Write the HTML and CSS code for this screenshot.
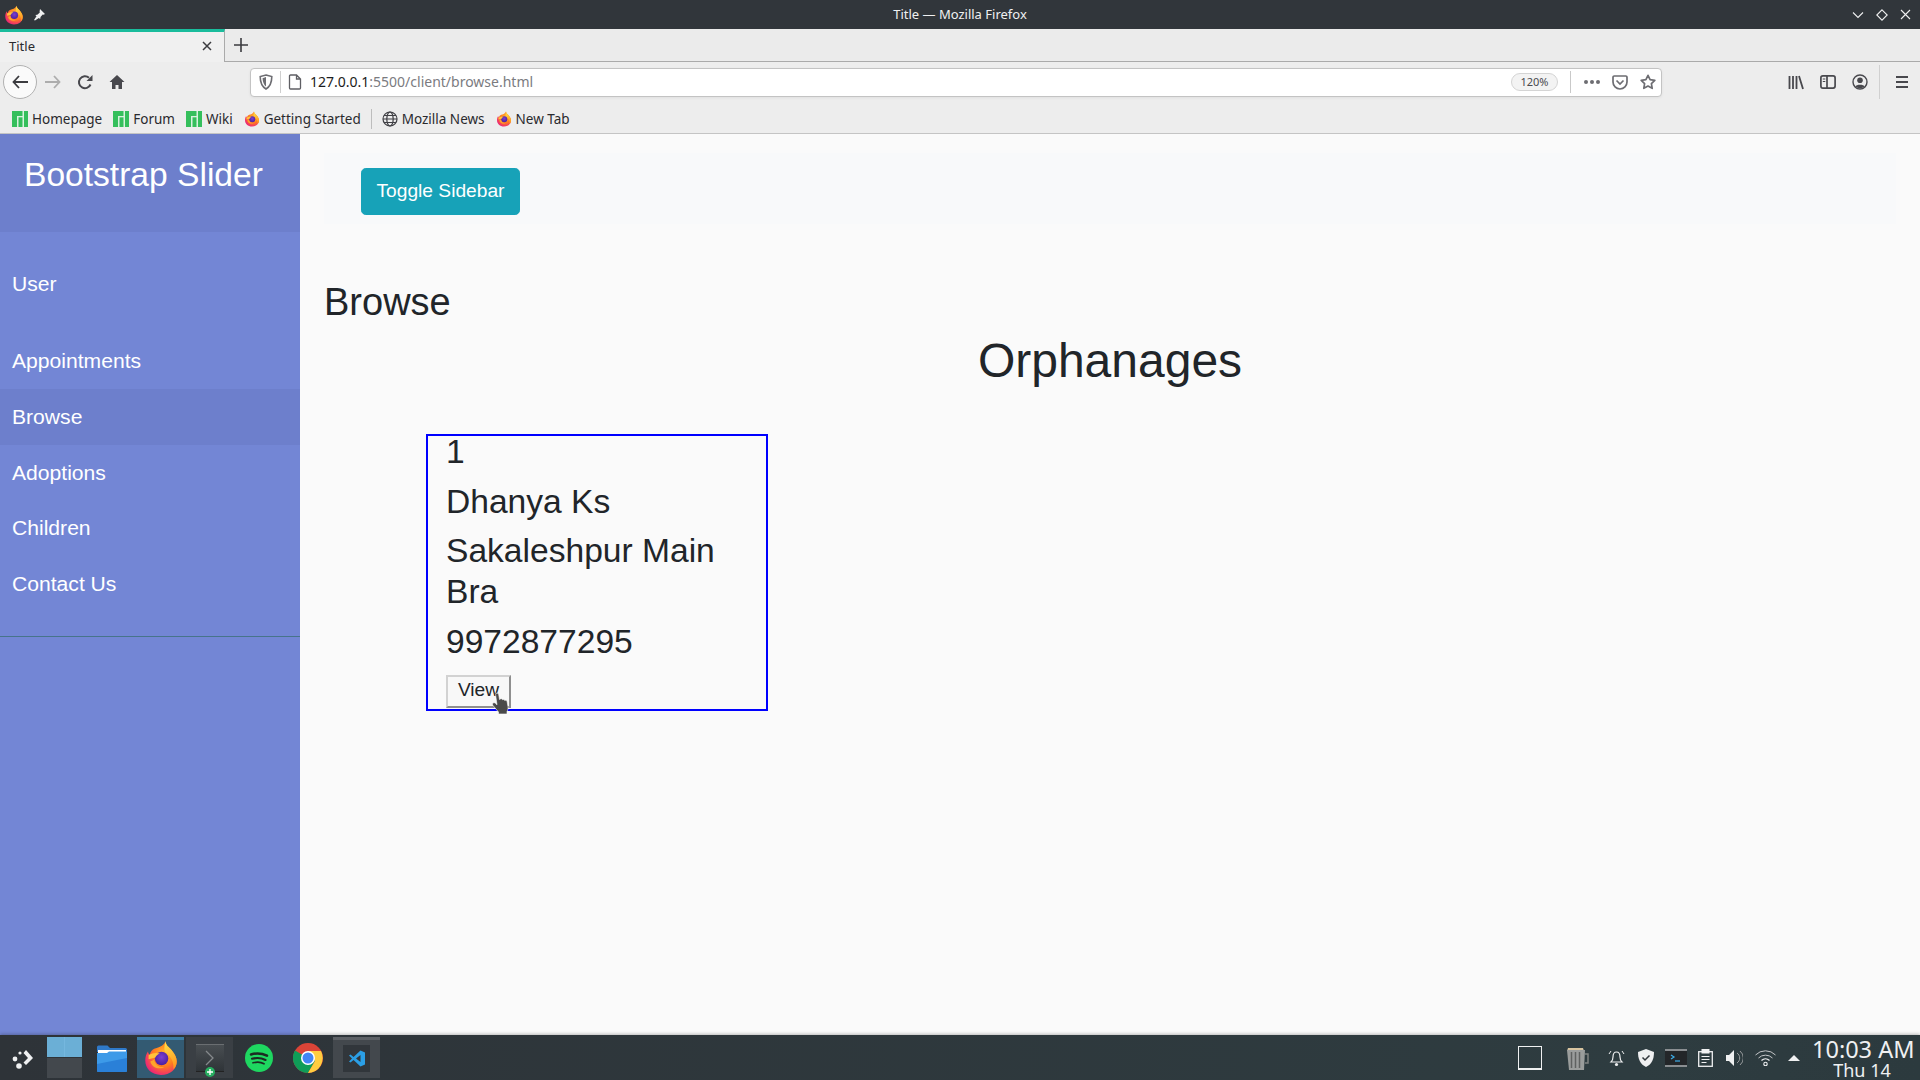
FILE: index.html
```html
<!DOCTYPE html>
<html lang="en">
<head>
<meta charset="utf-8">
<title>Title</title>
<link rel="stylesheet" href="styles.css">
</head>
<body>
<svg class="defs" width="0" height="0">
  <defs>
    <radialGradient id="ffBody" cx="0.6" cy="0.4" r="0.7">
      <stop offset="0" stop-color="#ffc02e"/><stop offset="0.5" stop-color="#ff7a1f"/><stop offset="0.85" stop-color="#f0326a"/><stop offset="1" stop-color="#e0207a"/>
    </radialGradient>
    <linearGradient id="ffFlame" x1="0" y1="0" x2="0.2" y2="1">
      <stop offset="0" stop-color="#ffe14a"/><stop offset="1" stop-color="#ff9a1f"/>
    </linearGradient>
    <radialGradient id="ffCore" cx="0.5" cy="0.4" r="0.6">
      <stop offset="0" stop-color="#7b3fd0"/><stop offset="1" stop-color="#4a1f9e"/>
    </radialGradient>
    <symbol id="firefox" viewBox="0 0 32 32">
      <path d="M20 1c.5 4 3 5 5.500 8 3 3.500 4.500 7 4.500 10 0 7-6 12-14 12S2 26 2 18c0-3 1-6 2.500-8 0 1.500.5 2.500 1.500 3 .5-2.500 2-4.500 4.500-5.500C13 6.500 18 6 20 1z" fill="url(#ffBody)"/>
      <path d="M20 1c.5 4 3 5 5.500 8 3 3.500 4.500 7 4.500 10 0 3-1 5-3 7 .5-5-1-10-5-13-2-1.500-3-3-3-5 0-3 .5-5 1-7z" fill="url(#ffFlame)"/>
      <circle cx="16.500" cy="16.500" r="6" fill="url(#ffCore)"/>
      <path d="M5 13.500c3-2 7-2.500 10-1.500-2 .8-3.500 2-4 3.500l-6 1.500z" fill="#ffc23a"/>
      <path d="M10 17.500c.5 4.500 4.500 7 9 6.500-4 2.500-11 1-12.500-5z" fill="#ffa52b"/>
    </symbol>
    <symbol id="manjaro" viewBox="0 0 16 16">
      <rect width="16" height="16" fill="#35bf5c"/>
      <rect x="5" y="5" width="1.500" height="11" fill="#d9f2df"/>
      <rect x="10.500" y="0" width="1.500" height="16" fill="#d9f2df"/>
      <rect x="5" y="5" width="6" height="1.300" fill="#d9f2df"/>
    </symbol>
  </defs>
</svg>

<header class="titlebar">
  <svg class="tb-fox" width="20" height="22"><use href="#firefox"/></svg>
  <svg class="tb-pin" width="12" height="12" viewBox="0 0 12 12"><path d="M7 0l5 5-1.500.8-.8-.3L7.500 8l-.3 2L5.800 9 2 11.500 1 11l2.500-3.800L2.300 6l2-.3 2.500-2.300-.2-.8z" fill="#eff0f1"/></svg>
  <div class="tb-title">Title — Mozilla Firefox</div>
  <div class="tb-controls">
    <svg width="12" height="8" viewBox="0 0 12 8"><path d="M1 1.500l5 5 5-5" fill="none" stroke="#eff0f1" stroke-width="1.100"/></svg>
    <svg width="12" height="12" viewBox="0 0 12 12"><path d="M6 .8L11.200 6 6 11.200.8 6z" fill="none" stroke="#eff0f1" stroke-width="1.100"/></svg>
    <svg width="11" height="11" viewBox="0 0 11 11"><path d="M1 1l9 9M10 1l-9 9" fill="none" stroke="#eff0f1" stroke-width="1.100"/></svg>
  </div>
</header>

<div class="tabstrip">
  <div class="tab">
    <span class="tab-title">Title</span>
    <svg width="10" height="10" viewBox="0 0 10 10"><path d="M1 1l8 8M9 1l-8 8" fill="none" stroke="#3b3b3f" stroke-width="1.500"/></svg>
  </div>
  <svg class="newtab" width="14" height="14" viewBox="0 0 14 14"><path d="M7 0v14M0 7h14" stroke="#3b3b3f" stroke-width="1.600"/></svg>
</div>

<nav class="toolbar">
  <div class="backbtn">
    <svg width="16" height="14" viewBox="0 0 16 14"><path d="M7 1L1.500 7 7 13M1.500 7H16" fill="none" stroke="#3b3b3f" stroke-width="1.800"/></svg>
  </div>
  <svg class="tool-forward" width="16" height="14" viewBox="0 0 16 14"><path d="M9 1l5.500 6L9 13M14.500 7H0" fill="none" stroke="#adadad" stroke-width="1.800"/></svg>
  <svg class="tool-reload" width="16" height="16" viewBox="0 0 16 16"><path d="M13.500 10.500A6 6 0 1 1 12 3.800" fill="none" stroke="#48484d" stroke-width="2"/><path d="M15.500 1v6h-6z" fill="#48484d"/></svg>
  <svg class="tool-home" width="16" height="16" viewBox="0 0 16 16"><path d="M8 1L.5 8H3v7h3.500v-4h3v4H13V8h2.500z" fill="#48484d"/><rect x="7" y="11" width="2" height="2" fill="#ededed"/></svg>
  <div class="urlbar">
    <svg class="url-shield" width="14" height="16" viewBox="0 0 14 16"><path d="M7 1l5.800 1.500c0 6-1.500 10-5.800 12.500C2.700 12.500 1.200 8.500 1.200 2.500z" fill="none" stroke="#6d6d72" stroke-width="1.600"/><path d="M7 3v9.500C5 11 3.800 8 3.500 4.200z" fill="#6d6d72"/></svg>
    <span class="url-sep"></span>
    <svg class="url-page" width="14" height="16" viewBox="0 0 14 16"><path d="M2.500 1h6L12.500 5v9a1 1 0 0 1-1 1h-9a1 1 0 0 1-1-1V2a1 1 0 0 1 1-1zM8.500 1v4h4" fill="none" stroke="#5f5f64" stroke-width="1.300"/></svg>
    <span class="url-text"><span class="url-host">127.0.0.1</span>:5500/client/browse.html</span>
    <span class="zoom-pill">120%</span>
    <span class="url-sep2"></span>
    <span class="dots"><i></i><i></i><i></i></span>
    <svg class="url-pocket" width="16" height="15" viewBox="0 0 16 15"><path d="M1 2.200A1.200 1.200 0 0 1 2.200 1h11.600A1.200 1.200 0 0 1 15 2.200V7a7 7 0 0 1-14 0z" fill="none" stroke="#6d6d72" stroke-width="1.700"/><path d="M4.500 5.500L8 9l3.500-3.500" fill="none" stroke="#6d6d72" stroke-width="1.700"/></svg>
    <svg class="url-star" width="16" height="16" viewBox="0 0 16 16"><path d="M8 1.300l2.100 4.300 4.700.7-3.400 3.300.8 4.700L8 12l-4.200 2.300.8-4.700L1.200 6.300l4.700-.7z" fill="none" stroke="#6d6d72" stroke-width="1.700" stroke-linejoin="round"/></svg>
  </div>
  <svg class="tool-lib" width="16" height="15" viewBox="0 0 16 15"><path d="M1.500 1v13M5 1v13M8.500 1v13M11 1l4 13" stroke="#48484d" stroke-width="1.800" fill="none"/></svg>
  <svg class="tool-side" width="16" height="14" viewBox="0 0 16 14"><rect x=".9" y=".9" width="14.200" height="12.200" rx="2" fill="none" stroke="#48484d" stroke-width="1.700"/><path d="M7 1v12" stroke="#48484d" stroke-width="1.700"/><path d="M2.800 4h2.500M2.800 6.500h2.500" stroke="#48484d" stroke-width="1.200"/></svg>
  <svg class="tool-acct" width="16" height="16" viewBox="0 0 16 16"><circle cx="8" cy="8" r="7" fill="none" stroke="#48484d" stroke-width="1.400"/><circle cx="8" cy="6.200" r="2.800" fill="#48484d"/><path d="M3.300 12.500c1-2.500 8.400-2.500 9.400 0-2 2.200-7.400 2.200-9.400 0z" fill="#48484d"/></svg>
  <span class="tool-sep"></span>
  <svg class="tool-menu" width="14" height="12" viewBox="0 0 14 12"><path d="M1 1h12M1 6h12M1 11h12" stroke="#48484d" stroke-width="1.800"/></svg>
</nav>

<div class="bookmarks">
  <span class="bm bm-first"><svg width="16" height="16"><use href="#manjaro"/></svg>Homepage</span>
  <span class="bm"><svg width="16" height="16"><use href="#manjaro"/></svg>Forum</span>
  <span class="bm"><svg width="16" height="16"><use href="#manjaro"/></svg>Wiki</span>
  <span class="bm"><svg width="16" height="16"><use href="#firefox"/></svg>Getting Started</span>
  <span class="bm-sep"></span>
  <span class="bm bm-news"><svg width="16" height="16" viewBox="0 0 16 16"><g fill="none" stroke="#3f3f44" stroke-width="1.200"><circle cx="8" cy="8" r="7"/><ellipse cx="8" cy="8" rx="3.200" ry="7"/><path d="M1 8h14M2 4.500h12M2 11.500h12"/></g></svg>Mozilla News</span>
  <span class="bm"><svg width="16" height="16"><use href="#firefox"/></svg>New Tab</span>
</div>

<div class="page">
  <aside class="sidebar">
    <div class="side-head"><h3>Bootstrap Slider</h3></div>
    <div class="side-list">
      <p class="side-user">User</p>
      <a class="side-item">Appointments</a>
      <a class="side-item active">Browse</a>
      <a class="side-item">Adoptions</a>
      <a class="side-item">Children</a>
      <a class="side-item">Contact Us</a>
    </div>
  </aside>
  <main class="content">
    <div class="navbar"><button class="toggle">Toggle Sidebar</button></div>
    <h2 class="browse">Browse</h2>
    <h1 class="orph">Orphanages</h1>
    <div class="cards">
      <article class="card">
        <h3>1</h3>
        <h3>Dhanya Ks</h3>
        <h3>Sakaleshpur Main Bra</h3>
        <h3>9972877295</h3>
        <span class="view-wrap">
          <button class="view">View</button>
          <svg class="cursor" width="18" height="24" viewBox="0 0 18 24"><path d="M4 1.500c1-.8 2.500-.2 2.700 1l.8 5 1-.6c1-.4 1.800 0 2 .8 1-.6 2-.2 2.200.7 1-.4 2.200.1 2.400 1.200l.9 5c.3 2-.2 3.500-1 5v2.400H6.500V20L1 13.500c-.8-1-.6-2 .2-2.500s1.800-.3 2.500.5l1.300 1.300L3.600 3c-.1-.6 0-1.100.4-1.500z" fill="#4a4a4a" stroke="#fff" stroke-width=".6"/></svg>
        </span>
      </article>
    </div>
  </main>
</div>

<footer class="taskbar">
  <svg class="launcher" width="24" height="24" viewBox="0 0 24 24"><path d="M15 4l7 8-7 7-2.500-2.500L17 12l-4.500-5z" fill="#eff0f1"/><circle cx="4" cy="13" r="2.400" fill="#eff0f1"/><circle cx="9" cy="7" r="1.600" fill="#eff0f1"/><circle cx="8" cy="20" r="2.800" fill="#eff0f1"/></svg>
  <div class="pager"><div class="pager-top"><span></span><span></span></div><div class="pager-bot"></div></div>
  <svg class="t-files" width="30" height="28" viewBox="0 0 30 28"><path d="M0 3a1.500 1.500 0 0 1 1.500-1.500h9L13 4h15.500A1.500 1.500 0 0 1 30 5.500V8H0z" fill="#2f79c9"/><rect x="1" y="6" width="28" height="5" fill="#fff"/><path d="M0 9h10l2-1.500h18v19a1.500 1.500 0 0 1-1.500 1.500h-27A1.500 1.500 0 0 1 0 26.500z" fill="#3d9ae8"/><path d="M0 20l30-6v12.500a1.500 1.500 0 0 1-1.500 1.500h-27A1.500 1.500 0 0 1 0 26.500z" fill="#2a80d8"/></svg>
  <div class="task task-fox"><svg width="36" height="36"><use href="#firefox"/></svg></div>
  <div class="task task-term">
    <div class="term"><svg width="10" height="16" viewBox="0 0 10 16"><path d="M1 1l7 7-7 7" fill="none" stroke="#85898c" stroke-width="1.300"/></svg></div>
    <svg class="term-plus" width="10" height="10" viewBox="0 0 10 10"><circle cx="5" cy="5" r="5" fill="#27ae60"/><path d="M5 2v6M2 5h6" stroke="#fff" stroke-width="1.400"/></svg>
  </div>
  <svg class="t-spot" width="28" height="28" viewBox="0 0 28 28"><circle cx="14" cy="14" r="14" fill="#1ed760"/><g fill="none" stroke="#1c2a22" stroke-linecap="round"><path d="M6 10.500c5-1.500 11-1.200 16 1.200" stroke-width="2.500"/><path d="M7 14.800c4.500-1.200 9.500-.9 13.500 1.200" stroke-width="2.100"/><path d="M8 18.800c4-1 8-.8 11 1" stroke-width="1.700"/></g></svg>
  <svg class="t-chrome" width="30" height="30" viewBox="0 0 30 30"><circle cx="15" cy="15" r="15" fill="#db4437"/><path d="M15 15L2 7.500A15 15 0 0 0 15 30l7.500-13z" fill="#0f9d58"/><path d="M15 8h13a15 15 0 0 1-13 22l7-12z" fill="#ffcd40"/><circle cx="15" cy="15" r="7" fill="#fff"/><circle cx="15" cy="15" r="5.500" fill="#4285f4"/></svg>
  <div class="task task-code"><div class="code"><svg width="16" height="17" viewBox="0 0 16 17"><path d="M11.500.5L16 2.500v12l-4.500 2L4.500 10 1.500 12.500 0 11.500 3 8.500 0 5.500l1.500-1L4.500 7zM11.500 5L7 8.500l4.500 3.500z" fill="#2b9fe6"/></svg></div></div>
  <div class="tray">
    <span class="showdesk"></span>
    <svg class="t-trash" width="26" height="26" viewBox="0 0 26 26"><path d="M3 3h15l1 3H2z" fill="#d8c4a0"/><path d="M2 5h18l-1 20H4z" fill="#9a9d9c"/><path d="M6.500 7v16M10.500 7v16M14.500 7v16" stroke="#5f6261" stroke-width="1.500"/><path d="M20 9h3v9h-3" fill="none" stroke="#7f8281" stroke-width="1.500"/></svg>
    <svg class="t-bell" width="17" height="18" viewBox="0 0 17 18"><path d="M8.500 3C5.500 3 5 5.500 5 8c0 2.500-1 4-2 5h11c-1-1-2-2.500-2-5 0-2.500-.5-5-3.500-5z" fill="none" stroke="#eff0f1" stroke-width="1.200"/><circle cx="8.500" cy="15.500" r="1.600" fill="#eff0f1"/><path d="M1 5l2-3M16 5l-2-3" stroke="#eff0f1" stroke-width="1"/></svg>
    <svg class="t-shield" width="16" height="18" viewBox="0 0 16 18"><path d="M8 0l8 3c0 7-2 12-8 15C2 15 0 10 0 3z" fill="#eff0f1"/><path d="M4.500 8.500L7 11l4.500-4.500" fill="none" stroke="#31363b" stroke-width="1.500"/></svg>
    <svg class="t-konsole" width="22" height="18" viewBox="0 0 22 18"><rect width="22" height="18" fill="#232629"/><rect width="22" height="2" fill="#8a8e91"/><rect y="16" width="22" height="2" fill="#8a8e91"/><path d="M6 6l3 2-3 2" fill="none" stroke="#3daee9" stroke-width="1.200"/><path d="M10 12h5" stroke="#3daee9" stroke-width="1.200"/></svg>
    <svg class="t-clip" width="15" height="18" viewBox="0 0 15 18"><rect x=".7" y="2.700" width="13.600" height="14.600" fill="none" stroke="#eff0f1" stroke-width="1.300"/><rect x="3.500" y="0" width="8" height="4.500" fill="#eff0f1"/><path d="M3.500 7.500h8M3.500 10.500h8M3.500 13.500h5" stroke="#eff0f1" stroke-width="1.100"/></svg>
    <svg class="t-vol" width="17" height="16" viewBox="0 0 17 16"><path d="M0 5h3l5-5v16l-5-5H0z" fill="#eff0f1"/><path d="M11 3a6 6 0 0 1 0 10M14 1a9 9 0 0 1 0 14" fill="none" stroke="#9a9d9f" stroke-width="1"/></svg>
    <svg class="t-wifi" width="21" height="16" viewBox="0 0 21 16"><g fill="none" stroke="#c4c6c8" stroke-width="1"><path d="M.5 5a14 14 0 0 1 20 0"/><path d="M3.500 8a10 10 0 0 1 14 0"/></g><path d="M6.500 10.500a6 6 0 0 1 8 0" fill="none" stroke="#eff0f1" stroke-width="1.200"/><circle cx="10.500" cy="14" r="1.700" fill="none" stroke="#eff0f1" stroke-width="1.100"/></svg>
    <svg class="t-up" width="12" height="6" viewBox="0 0 12 6"><path d="M0 6l6-6 6 6z" fill="#eff0f1"/></svg>
    <div class="clock"><div class="clock-time">10:03 AM</div><div class="clock-date">Thu 14</div></div>
  </div>
</footer>
</body>
</html>
```

FILE: styles.css
```css
* { box-sizing: border-box; }
html, body { margin: 0; height: 100%; overflow: hidden; }
body {
  display: flex;
  flex-direction: column;
  width: 1920px;
  height: 1080px;
  font-family: "Liberation Sans", Arial, sans-serif;
  background: #fafafa;
}
.defs { position: absolute; }
svg { flex: none; display: block; }

/* Window title bar */
.titlebar {
  height: 29px;
  background: #31363b;
  display: flex;
  align-items: center;
  padding-left: 4px;
  position: relative;
  flex: none;
}
.tb-pin { margin-left: 9px; }
.tb-title {
  position: absolute;
  left: 0;
  right: 0;
  bottom: 6px;
  text-align: center;
  color: #eff0f1;
  font: 13px/18px "Noto Sans", sans-serif;
}
.tb-controls {
  margin-left: auto;
  display: flex;
  align-items: center;
  gap: 12px;
  padding-right: 9px;
}

/* Tabs */
.tabstrip {
  height: 33px;
  flex: none;
  display: flex;
  align-items: center;
  background: #ebebeb;
  border-bottom: 1px solid #aaaaaa;
}
.tab {
  width: 225px;
  height: 33px;
  flex: none;
  background: #f0f0f0;
  border-top: 3px solid #1abc9c;
  border-right: 1px solid #aaaaaa;
  display: flex;
  align-items: center;
  justify-content: space-between;
  padding: 0 12px 1px 9px;
}
.tab-title { font: 13px "Noto Sans", sans-serif; color: #2a2a2e; }
.newtab { margin-left: 9px; }

/* Toolbar */
.toolbar {
  height: 43px;
  flex: none;
  background: #ededed;
  display: flex;
  align-items: center;
  padding: 0 0 3px 3px;
}
.backbtn {
  width: 34px;
  height: 34px;
  border-radius: 50%;
  background: #fafafa;
  border: 1px solid #b1b1b1;
  display: flex;
  align-items: center;
  justify-content: center;
  flex: none;
}
.tool-forward { margin-left: 8px; }
.tool-reload { margin-left: 16px; }
.tool-home { margin-left: 16px; }
.urlbar {
  margin-left: 125px;
  width: 1412px;
  height: 29px;
  flex: none;
  background: #fff;
  border: 1px solid #c3c3c3;
  border-radius: 4px;
  display: flex;
  align-items: center;
  padding-left: 8px;
  box-shadow: 0 1px 3px rgba(0,0,0,.06);
}
.url-shield { flex: none; }
.url-sep { width: 1px; height: 22px; background: #cfcfcf; margin: 0 7px; flex: none; }
.url-page { flex: none; }
.url-text { margin: 0 0 2px 8px; font: 14px "Noto Sans", sans-serif; color: #7b7b7f; white-space: nowrap; }
.url-host { color: #1c1c20; }
.zoom-pill {
  margin-left: auto;
  width: 47px;
  height: 18px;
  border: 1px solid #d4d4d4;
  border-radius: 9px;
  background: #f3f3f3;
  font: 11px/16px "Noto Sans", sans-serif;
  text-align: center;
  color: #4a4a4f;
  flex: none;
}
.url-sep2 { width: 1px; height: 22px; background: #c9c9c9; margin-left: 12px; flex: none; }
.dots { display: flex; gap: 2px; margin-left: 13px; flex: none; }
.dots i { width: 4px; height: 4px; border-radius: 50%; background: #6d6d72; }
.url-pocket { margin-left: 12px; }
.url-star { margin-left: 12px; margin-right: 5px; }
.tool-lib { margin-left: 126px; }
.tool-side { margin-left: 16px; }
.tool-acct { margin-left: 16px; }
.tool-sep { width: 1px; height: 34px; background: #d0d0d0; margin-left: 11px; flex: none; }
.tool-menu { margin-left: 15px; }

/* Bookmarks */
.bookmarks {
  height: 29px;
  flex: none;
  background: #ededed;
  border-bottom: 1px solid #c4c4c4;
  display: flex;
  align-items: center;
  padding: 0 0 1px 12px;
  font: 13.5px "Noto Sans", sans-serif;
  color: #2a2a2e;
  gap: 11px;
}
.bm { display: flex; align-items: center; gap: 4px; white-space: nowrap; }
.bm-sep { width: 1px; height: 20px; background: #bdbdbd; margin: 0 -1px; }

/* Page */
.page { flex: 1; display: flex; min-height: 0; }
.sidebar { width: 300px; flex: none; background: #7386d5; color: #fff; }
.side-head { background: #6d7fcc; padding: 21px 24px 0; height: 98px; }
.side-head h3 { margin: 0; font-weight: 400; font-size: 33.6px; line-height: 1.2; }
.side-list { padding: 24px 0; border-bottom: 1px solid #47748b; font-size: 21.12px; line-height: 1.5; }
.side-user { margin: 0 0 21.5px; padding: 12px; }
.side-item { display: block; padding: 12px; }
.side-item.active { background: #6d7fcc; }
.content { flex: 1; padding: 19px 24px 0; color: #212529; min-width: 0; }
.navbar {
  height: 71px;
  background: #f8f9fa;
  padding: 15px 0 0 37px;
}
.toggle {
  width: 159px;
  height: 47px;
  background: #17a2b8;
  color: #fff;
  border: 1px solid #17a2b8;
  border-radius: 4.8px;
  font: 19.2px/1.5 "Liberation Sans", sans-serif;
  padding: 0;
}
.browse { margin: 0; padding-top: 55px; font-weight: 400; font-size: 38px; line-height: 46px; }
.orph { margin: 7px 0 0; text-align: center; font-weight: 400; font-size: 48px; line-height: 1.2; }
.cards { padding: 0 0 0 102px; margin-top: 44px; }
.card {
  width: 342px;
  height: 277px;
  border: 2px solid #0000ff;
  padding: 0 18px;
}
.card h3 { margin: 0 0 9.6px; font-weight: 400; font-size: 33.6px; line-height: 1.2; }
.card h3:first-child { margin-top: -4px; }
.view-wrap { display: inline-block; position: relative; }
.view {
  display: block;
  width: 65px;
  height: 33px;
  margin-top: 3px;
  background: #f8f8f8;
  border: 2px solid;
  border-color: #d2d2d2 #8f8f8f #8f8f8f #d2d2d2;
  color: #212529;
  font: 19.2px "Liberation Sans", sans-serif;
  padding: 0 0 2px;
}
.cursor { position: absolute; left: 46px; top: 20px; }

/* Taskbar */
.taskbar {
  height: 45px;
  flex: none;
  background: linear-gradient(90deg, #2e3338, #2e3c40 85%, #2c3a3e);
  display: flex;
  align-items: center;
  box-shadow: 0 -1px 3px rgba(0,0,0,.25);
  position: relative;
}
.launcher { margin-left: 11px; }
.pager { width: 35px; height: 41px; margin-left: 12px; display: flex; flex-direction: column; gap: 1px; flex: none; }
.pager-top { flex: 1; display: flex; gap: 1px; background: #75b7de; }
.pager-top span { flex: 1; background: #6bafd6; }
.pager-bot { flex: 1; background: #43484d; }
.t-files { margin-left: 15px; }
.task { width: 47px; height: 41px; display: flex; align-items: center; justify-content: center; flex: none; position: relative; }
.task-fox { margin-left: 10px; background: #335a72; border-top: 3px solid #3b7ea6; padding-bottom: 3px; }
.task-term { margin-left: 2px; background: #3a3f44; }
.term { width: 28px; height: 28px; background: linear-gradient(#494e52, #2f3438); border-top: 1px solid #6a6e71; border-bottom: 1px solid #222; display: flex; align-items: center; justify-content: center; }
.term-plus { position: absolute; left: 19px; bottom: 1px; }
.t-spot { margin-left: 12px; }
.t-chrome { margin-left: 20px; }
.task-code { margin-left: 10px; background: #43484d; border-top: 3px solid #5c6065; padding-bottom: 2px; }
.code { width: 27px; height: 27px; background: #31363b; display: flex; align-items: center; justify-content: center; }
.tray { margin-left: auto; display: flex; align-items: center; padding-right: 8px; }
.showdesk { width: 24px; height: 24px; border: 1px solid #eff0f1; border-bottom-width: 2px; box-shadow: inset 0 -3px 0 #2e3c40; }
.t-trash { margin-left: 23px; }
.t-bell { margin-left: 17px; }
.t-shield { margin-left: 13px; }
.t-konsole { margin-left: 11px; }
.t-clip { margin-left: 11px; }
.t-vol { margin-left: 13px; }
.t-wifi { margin-left: 12px; }
.t-up { margin-left: 12px; }
.clock { margin-left: 12px; width: 100px; color: #eff0f1; text-align: center; font-family: "Noto Sans", sans-serif; }
.clock-time { font-size: 23.5px; line-height: 25px; white-space: nowrap; }
.clock-date { font-size: 18px; line-height: 17px; }
```
